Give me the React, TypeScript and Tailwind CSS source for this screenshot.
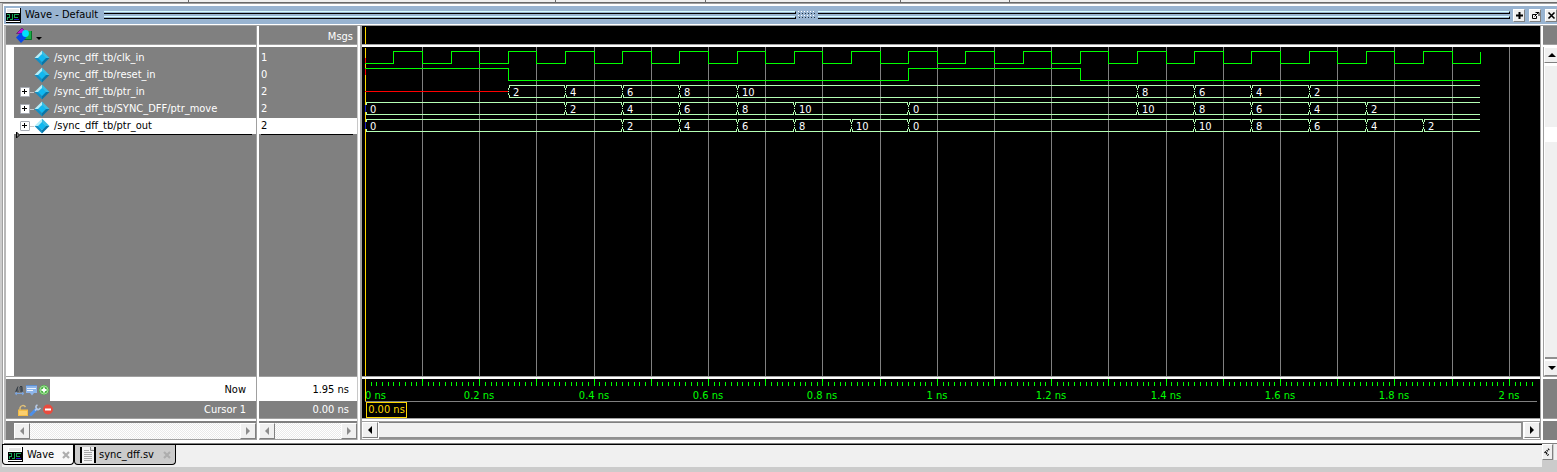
import React from "react";

const PX_PER_NS = 572;
const END = 1.95;
const px = (t: number) => 3 + Math.floor(t * PX_PER_NS + 0.3);

type Bus = { top: number; values: [number, string][] };

const signals = [
  { name: "/sync_dff_tb/clk_in", value: "1", bus: false },
  { name: "/sync_dff_tb/reset_in", value: "0", bus: false },
  { name: "/sync_dff_tb/ptr_in", value: "2", bus: true },
  { name: "/sync_dff_tb/SYNC_DFF/ptr_move", value: "2", bus: true },
  { name: "/sync_dff_tb/ptr_out", value: "2", bus: true, selected: true },
];

const buses: Bus[] = [
  {
    top: 38,
    values: [[0.25, "2"], [0.35, "4"], [0.45, "6"], [0.55, "8"], [0.65, "10"], [1.35, "8"], [1.45, "6"], [1.55, "4"], [1.65, "2"]],
  },
  {
    top: 55,
    values: [[0, "0"], [0.35, "2"], [0.45, "4"], [0.55, "6"], [0.65, "8"], [0.75, "10"], [0.95, "0"], [1.35, "10"], [1.45, "8"], [1.55, "6"], [1.65, "4"], [1.75, "2"]],
  },
  {
    top: 72,
    values: [[0, "0"], [0.45, "2"], [0.55, "4"], [0.65, "6"], [0.75, "8"], [0.85, "10"], [0.95, "0"], [1.45, "10"], [1.55, "8"], [1.65, "6"], [1.75, "4"], [1.85, "2"]],
  },
];

function clockPath() {
  let d = `M${px(0)} 16.5`;
  for (let i = 1; i <= 39; i++) {
    const x = px(i * 0.05) + 0.5;
    d += `H${x}V${i % 2 ? 4.5 : 16.5}`;
  }
  return d;
}

function BusTrace({ bus }: { bus: Bus }) {
  const t = bus.top;
  return (
    <g>
      {bus.values.map(([time, label], i) => {
        const a = px(time);
        const last = i + 1 === bus.values.length;
        const b = last ? px(END) : px(bus.values[i + 1][0]);
        const rails = `M${a + 1} ${t + 0.5}H${b}M${a + 1} ${t + 12.5}H${b}`;
        const opening = `M${a + 1.5} ${t}v3M${a + 0.5} ${t + 3}v2M${a + 0.5} ${t + 6}v1M${a + 0.5} ${t + 8}v2M${a + 1.5} ${t + 10}v3`;
        const closing = last ? "" : `M${b - 0.5} ${t}v3M${b - 0.5} ${t + 10}v3`;
        return (
          <g key={time}>
            <path d={rails + opening + closing} fill="none" stroke="#b4ffb4" shapeRendering="crispEdges" />
            <text x={a + 5} y={t + 11} fill="#fff">{label}</text>
          </g>
        );
      })}
    </g>
  );
}

function Waveform() {
  const g = Array.from({ length: 20 }, (_, i) => px((i + 1) / 10) + 0.5);
  return (
    <svg className="block h-full w-full" role="img" aria-label="Signal waveforms">
      {g.map((x) => (
        <line key={x} x1={x} x2={x} y1="0" y2="100%" stroke="#808080" shapeRendering="crispEdges" />
      ))}
      <line x1="3.5" x2="3.5" y1="1" y2="100%" stroke="#ffd700" shapeRendering="crispEdges" />
      <path d={clockPath()} fill="none" stroke="#00ff00" shapeRendering="crispEdges" />
      <path
        d={`M3 21.5H${px(0.25) + 0.5}V33.5H${px(0.95) + 0.5}V21.5H${px(1.25) + 0.5}V33.5H${px(END)}`}
        fill="none"
        stroke="#00ff00"
        shapeRendering="crispEdges"
      />
      <path d={`M3 44.5H${px(0.25)}`} stroke="#ff0000" shapeRendering="crispEdges" />
      <path d="M3.5 11v5M3.5 22v6" stroke="#ff0000" shapeRendering="crispEdges" />
      {buses.map((b) => (
        <BusTrace key={b.top} bus={b} />
      ))}
      <path d="M3.5 58v7M3.5 75v7" stroke="#2020c0" shapeRendering="crispEdges" />
    </svg>
  );
}

function Timeline() {
  return (
    <svg className="block h-full w-full" role="img" aria-label="Time scale">
      {Array.from({ length: 204 }, (_, i) => i + 1).map((i) => {
        const x = px(i / 100) + 0.5;
        return <line key={i} x1={x} x2={x} y1={i % 10 ? 3 : 0} y2="7" stroke="#00ff00" shapeRendering="crispEdges" />;
      })}
      <line x1="3.5" x2="3.5" y1="0" y2="22" stroke="#ffd700" shapeRendering="crispEdges" />
      <g fill="#00ff00" textAnchor="middle">
        <text x="3" y="20" textAnchor="start">0 ns</text>
        {Array.from({ length: 10 }, (_, i) => (i + 1) / 5).map((t) => (
          <text key={t} x={px(t)} y="20">{`${t} ns`}</text>
        ))}
      </g>
    </svg>
  );
}

function Diamond() {
  return (
    <svg className="h-4 w-4 shrink-0" viewBox="0 0 16 16">
      <path d="M8 0.5L0.5 8H4.5L8 4.2z" fill="#b4eefa" />
      <path d="M8 0.5L15.5 8H11.5L8 4.2z" fill="#38bde4" />
      <path d="M0.5 8L8 15.5V11.8L4.5 8z" fill="#148fc4" />
      <path d="M15.5 8L8 15.5V11.8L11.5 8z" fill="#0876a8" />
      <path d="M8 4L12 8L8 12L4 8z" fill="#10b8f0" />
    </svg>
  );
}

function WaveIcon() {
  return (
    <svg className="h-[15px] w-[15px] shrink-0" viewBox="0 0 15 15" shapeRendering="crispEdges">
      <path d="M0 0h15v15H0z" fill="#000" />
      <path d="M0 0h14v14H0z" fill="#fff" />
      <path d="M1 1h12v3H1z" fill="#e6e6e6" />
      <path d="M0 5h14v8H0z" fill="#000" />
      <path d="M1 6.500h3M3.500 6v3M1 9.500h3M1.500 9v3M6.500 6v3M4 11.500h3M6.500 9v3M8 6.500h5M8.500 6v4M8 9.500h4" fill="none" stroke="#18a058" />
      <path d="M8 11.500h5" stroke="#3018d0" />
    </svg>
  );
}

function FileIcon() {
  return (
    <svg className="h-4 w-4 shrink-0" viewBox="0 0 16 16">
      <path d="M0 0h16v16H0z" fill="#000" />
      <path d="M2 0h12v16H2z" fill="#f4f4f4" />
      <path d="M10.500 0v3.500H14" fill="#ddd" stroke="#888" />
      <path d="M4 3.500h5M4 5.500h8M4 7.500h8M4 9.500h8M4 11.500h8M4 13.500h8" stroke="#a8a8a8" />
    </svg>
  );
}

function CloseX() {
  return (
    <svg className="h-2 w-2" viewBox="0 0 8 8">
      <path d="M1 1l6 6M7 1l-6 6" stroke="#adadad" strokeWidth="2.2" />
    </svg>
  );
}

function ColumnIcon() {
  return (
    <svg className="h-4 w-7" viewBox="0 0 28 16">
      <path d="M0.500 6.500L6 1l5 5.500z" fill="#c010d8" stroke="#400050" strokeWidth="0.500" />
      <path d="M9 4h7v9H7z" fill="#18b048" />
      <path d="M15.500 4v8.500H8" fill="none" stroke="#087028" />
      <path d="M5 5.500L0 10.500 5 16l5.500-5.500z" fill="#0848e8" />
      <circle cx="9.500" cy="6.500" r="3.400" fill="#00e0ff" />
      <path d="M20 10h6l-3 3z" fill="#000" />
    </svg>
  );
}

function NowIcons() {
  return (
    <svg className="h-3 w-9" viewBox="0 0 36 12">
      <path d="M1 8l2.500-5L5 8zM5 3h3l1 5H6z" fill="#505860" />
      <path d="M2 7.500l2-5M6 2.500h2v5" fill="none" stroke="#343c44" />
      <path d="M1 9.500h9M3 8L1 9.500 3 11M8 8l2 1.500L8 11" fill="none" stroke="#7ba4dc" />
      <path d="M12 1h11v8h-3l-2 2.500L16 9h-4z" fill="#8db5ea" />
      <path d="M13 4.500h9M13 6.500h6" stroke="#edf5ff" />
      <path d="M12 1.500h11" stroke="#5c8ed0" />
      <circle cx="30" cy="6" r="5" fill="#4fb848" />
      <circle cx="30" cy="6" r="4" fill="none" stroke="#a4dc9a" />
      <path d="M30 3.500v5M27.500 6h5" stroke="#fff" strokeWidth="1.800" />
    </svg>
  );
}

function CursorIcons() {
  return (
    <svg className="h-3 w-9" viewBox="0 0 36 12">
      <path d="M3 6V4a3 3 0 0 1 5.500-1" fill="none" stroke="#e0c078" strokeWidth="1.500" />
      <path d="M1 5.500h10V12H1z" fill="#f5bd45" />
      <path d="M2 8h8M2 10h8" stroke="#ffe09a" />
      <path d="M14 10.500l5-5" stroke="#4d8fe8" strokeWidth="3" strokeLinecap="round" />
      <path d="M18 6.500l2-2M20.500 1q-2.500 1-1 3.500t4-.5" fill="none" stroke="#b8cce8" strokeWidth="1.600" />
      <circle cx="31" cy="5.500" r="5" fill="#e84b3e" />
      <path d="M28 5.500h6" stroke="#fff" strokeWidth="2" />
    </svg>
  );
}

const arrows = {
  left: "M6 0v8L2 4z",
  right: "M2 0v8l4-4z",
  up: "M0 6h8L4 2z",
  down: "M0 2h8L4 6z",
};

function ScrollButton({ dir, dim = false }: { dir: keyof typeof arrows; dim?: boolean }) {
  return (
    <button
      aria-label={`Scroll ${dir}`}
      className="flex h-4 w-4 shrink-0 items-center justify-center border border-t-white border-l-white border-r-[#808080] border-b-[#808080] bg-[#f0f0f0]"
    >
      <svg className="h-2 w-2 shrink-0" viewBox="0 0 8 8">
        <path d={arrows[dir]} fill={dim ? "#8c8c8c" : "#000"} />
      </svg>
    </button>
  );
}

function DimScrollbar() {
  return (
    <div className="flex h-[19px] flex-1 border-t-2 border-b border-t-[#808080] border-b-[#a0a0a0] bg-[#f5f5f5]">
      <ScrollButton dir="left" dim />
      <div className="flex-1 bg-[repeating-conic-gradient(#e9e9e9_0_25%,#ffffff_0_50%)] bg-[length:2px_2px]" />
      <ScrollButton dir="right" dim />
    </div>
  );
}

function Divider() {
  return <div className="h-[3px] shrink-0 border-t border-[#a0a0a0] bg-white" />;
}

function Sash({ wide = false }: { wide?: boolean }) {
  return (
    <div
      className={
        wide
          ? "w-[5px] shrink-0 border-r-2 border-l border-l-[#c8c8c8] border-r-[#a0a0a0] bg-white"
          : "w-[3px] shrink-0 border-l border-[#a0a0a0] bg-white"
      }
    />
  );
}

function TitleButton({ label, children }: { label: string; children: React.ReactNode }) {
  return (
    <button
      aria-label={label}
      className="flex h-[13px] w-3 shrink-0 items-center justify-center border border-t-white border-l-white border-r-[#808080] border-b-[#808080] bg-[#f0f0f0]"
    >
      <svg className="h-[9px] w-[9px] shrink-0" viewBox="0 0 9 9" fill="none" stroke="#000">
        {children}
      </svg>
    </button>
  );
}

function Grip() {
  return (
    <div className="flex flex-1 flex-col gap-[2px]">
      {[0, 1].map((i) => (
        <div key={i} className="h-[3px] border-t border-r border-b border-t-[#d8ffff] border-r-black border-b-black" />
      ))}
    </div>
  );
}

export default function App() {
  return (
    <div className="flex h-screen flex-col overflow-hidden bg-[#cbcbcb] font-['DejaVu_Sans_Condensed','DejaVu_Sans',sans-serif] text-[11px] leading-4 text-black">
      <div className="flex h-[3px] shrink-0 border-b border-[#696969] bg-[#f0f0f0]">
        <div className="w-[189px] border-r border-[#696969]" />
        <div className="w-[367px] border-r border-[#696969]" />
        <div className="w-[150px] border-r border-[#696969]" />
        <div className="w-[195px] border-r border-[#696969]" />
        <div className="w-[109px] border-r border-[#696969]" />
      </div>

      <main className="ml-[2px] flex min-h-0 flex-1 flex-col border-t border-l border-[#a0a0a0] bg-white pt-[2px] pl-px">
        <header className="flex h-[18px] shrink-0 items-center bg-[#99b4d1] pl-[2px]">
          <WaveIcon />
          <h1 className="mr-[6px] ml-1 whitespace-nowrap">Wave - Default</h1>
          <Grip />
          <svg className="h-2 w-[22px] shrink-0" viewBox="0 0 22 8" shapeRendering="crispEdges">
            {[0, 1, 2, 3].map((r) => (
              <path
                key={r}
                d={`M${2 + (r % 2)} ${r * 2 + 0.5}h18`}
                stroke={r % 2 ? "#203040" : "#fff"}
                strokeDasharray="1 2"
              />
            ))}
          </svg>
          <Grip />
          <div className="ml-[3px] flex shrink-0 gap-1">
            <TitleButton label="Zoom pane">
              <path d="M4.500 1v7M1 4.500h7" strokeWidth="2" />
            </TitleButton>
            <TitleButton label="Undock pane">
              <path d="M5 3.500H1.500v4h4V5M3.500 5.500l4-4M4.500 1.500h3.500v3.500" />
            </TitleButton>
            <TitleButton label="Close pane">
              <path d="M1.500 1.500l6 6M7.500 1.500l-6 6" strokeWidth="1.600" />
            </TitleButton>
          </div>
        </header>
        <div className="h-[2px] shrink-0 border-b border-[#a0a0a0] bg-white" />

        <div className="flex min-h-0 flex-1 border-l-2 border-[#b8b8b8]">
          <section className="flex w-[250px] shrink-0 flex-col">
            <div className="flex h-[18px] shrink-0 items-center bg-[#808080] pl-[10px]">
              <button aria-label="Column layout"><ColumnIcon /></button>
            </div>
            <Divider />
            <div className="min-h-0 flex-1 border-l-8 border-white bg-[#808080] pt-[3px]">
              {signals.map((s) => (
                <div
                  key={s.name}
                  className={
                    s.selected
                      ? "relative flex h-4 items-center bg-white pl-[6px] text-black"
                      : "flex h-[17px] items-center pb-px pl-[6px] text-white"
                  }
                >
                  {s.bus ? (
                    <>
                      <button
                        aria-label={`Expand ${s.name}`}
                        className="flex h-[10px] w-[10px] items-center justify-center rounded-[1px] border border-[#a8acb4] bg-white text-black"
                      >
                        <svg className="h-[6px] w-[6px] shrink-0" viewBox="0 0 6 6" shapeRendering="crispEdges">
                          <path d="M0 2.500h5M2.500 0v5" stroke="#000" />
                        </svg>
                      </button>
                      <span className="h-px w-1 bg-[#c8c8c8]" />
                    </>
                  ) : (
                    <span className="w-[14px]" />
                  )}
                  <Diamond />
                  <span className="ml-1 whitespace-nowrap">{s.name}</span>
                  {s.selected && (
                    <svg className="absolute top-[13px] left-[2px] h-2 w-1" viewBox="0 0 4 8">
                      <path d="M0.500 1v6L3.500 4z" fill="#808080" stroke="#000" />
                    </svg>
                  )}
                </div>
              ))}
              <div className="mr-1 ml-[6px] h-px bg-black" />
            </div>
            <Divider />
            <div className="flex h-[22px] shrink-0">
              <div className="flex w-11 items-center bg-[#808080] pl-2"><NowIcons /></div>
              <div className="flex flex-1 items-center justify-end bg-white pr-[10px]">Now</div>
            </div>
            <div className="flex h-[17px] shrink-0 items-center justify-between bg-[#808080] pr-[10px] pl-[11px] text-white">
              <CursorIcons />
              Cursor 1
            </div>
            <Divider />
            <div className="flex shrink-0 bg-[#808080] pl-2"><DimScrollbar /></div>
          </section>

          <Sash />

          <section className="flex w-[98px] shrink-0 flex-col">
            <div className="flex h-[18px] shrink-0 items-center justify-end bg-[#808080] pt-1 pr-1 text-white">Msgs</div>
            <Divider />
            <div className="min-h-0 flex-1 bg-[#808080] pt-[3px]">
              {signals.map((s) => (
                <div
                  key={s.name}
                  className={s.selected ? "h-4 bg-white pl-[2px] leading-4 text-black" : "h-[17px] pl-[2px] leading-4 text-white"}
                >
                  {s.value}
                </div>
              ))}
              <div className="mr-1 ml-[2px] h-px bg-black" />
            </div>
            <Divider />
            <div className="flex h-[22px] shrink-0 items-center justify-end bg-white pr-2">1.95 ns</div>
            <div className="flex h-[17px] shrink-0 items-center justify-end bg-[#808080] pr-2 text-white">0.00 ns</div>
            <Divider />
            <div className="flex shrink-0"><DimScrollbar /></div>
          </section>

          <Sash wide />

          <section className="flex min-w-0 flex-1 flex-col">
            <div className="h-[18px] shrink-0 bg-black pt-px pl-[3px]">
              <div className="h-full border-l border-[#ffd700]" />
            </div>
            <Divider />
            <div className="min-h-0 flex-1 bg-black"><Waveform /></div>
            <Divider />
            <div className="h-[22px] shrink-0 bg-black"><Timeline /></div>
            <div className="flex h-[17px] shrink-0 bg-black pr-[3px] pl-[3px]">
              <div className="flex flex-1 border-t border-[#808080] pl-px">
                <div className="flex h-4 w-[41px] items-center justify-center border border-[#ffd700] whitespace-nowrap text-[#ffd700]">
                  0.00 ns
                </div>
              </div>
            </div>
            <Divider />
            <div className="flex h-[19px] shrink-0 border-t border-b border-[#a0a0a0] bg-white">
              <ScrollButton dir="left" />
              <div className="mx-px flex-1 border-t border-r-2 border-b-2 border-t-[#808080] border-r-[#909090] border-b-[#909090] bg-[#f0f0f0]" />
              <ScrollButton dir="right" />
            </div>
          </section>

          <Sash />

          <section className="flex w-[14px] shrink-0 flex-col overflow-hidden">
            <div className="h-[18px] shrink-0 bg-[#808080]" />
            <Divider />
            <div className="flex min-h-0 flex-1 flex-col border-l border-[#a0a0a0] bg-white">
              <ScrollButton dir="up" />
              <div className="mt-[3px] ml-px h-[61px] bg-[#f0f0f0]" />
              <div className="h-[15px]" />
              <div className="mb-px ml-px flex-1 border-b-2 border-[#909090] bg-[#f0f0f0]" />
              <ScrollButton dir="down" />
            </div>
            <Divider />
            <div className="h-[39px] shrink-0 bg-[#808080]" />
            <Divider />
            <div className="h-[19px] shrink-0 bg-[#808080]" />
          </section>
        </div>
        <div className="h-1 shrink-0 border-b border-[#808080] bg-white" />
      </main>

      <footer className="ml-[2px] flex h-[23px] shrink-0 items-start">
        <nav className="flex h-full flex-1 items-start border-t border-black bg-[#f0f0f0]" aria-label="Open documents">
          <div className="flex h-5 w-[72px] items-center rounded-b border-r border-b border-l border-black bg-[#f8f8f8] pl-[5px]">
            <WaveIcon />
            <button className="ml-1 flex-1 text-left">Wave</button>
            <button aria-label="Close Wave" className="mr-[3px]"><CloseX /></button>
          </div>
          <div className="flex h-5 w-[102px] items-center rounded-b border-r border-b border-l border-black bg-[#cbcbcb] pl-[5px]">
            <FileIcon />
            <button className="ml-[3px] flex-1 text-left">sync_dff.sv</button>
            <button aria-label="Close sync_dff.sv" className="mr-1"><CloseX /></button>
          </div>
        </nav>
        <button
          aria-label="Previous tab"
          className="flex h-4 w-[11px] items-center border border-t-white border-l-white border-r-[#808080] border-b-[#808080] bg-[#f0f0f0]"
        >
          <svg className="h-[9px] w-2" viewBox="0 0 8 9">
            <path d="M6 1L2.500 4.500 6 8" fill="none" stroke="#000" strokeDasharray="1 1" strokeWidth="2" />
          </svg>
        </button>
        <span className="ml-px h-4 w-[3px] bg-[#f0f0f0]" />
      </footer>
      <div className="h-[5px] shrink-0" />
    </div>
  );
}
